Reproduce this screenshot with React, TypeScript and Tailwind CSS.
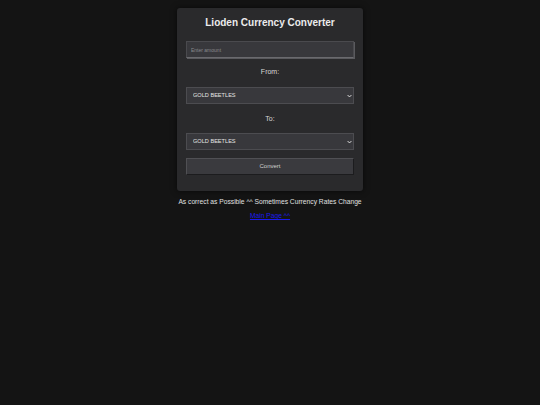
import React, { useState } from 'react';

const CURRENCIES = ['GOLD BEETLES', 'SILVER BEETLES', 'GEMS'];

const Chevron = () => (
  <svg viewBox="0 0 8 6" className="absolute right-[2px] top-[6.5px] w-[5px] h-[4px] pointer-events-none">
    <path d="M1 1.5 L4 4.5 L7 1.5" fill="none" stroke="#e0e0e0" strokeWidth="1.6" />
  </svg>
);

const App: React.FC = () => {
  const [amount, setAmount] = useState('');
  const [from, setFrom] = useState(CURRENCIES[0]);
  const [to, setTo] = useState(CURRENCIES[0]);

  return (
    <div className="min-h-[405px] bg-[#141414] font-['Liberation_Sans',Arial,sans-serif] text-[#e6e6e6] flex flex-col items-center pt-[8px]">
      <div className="w-[186px] bg-[#2a2a2c] rounded-[3px] shadow-[0_0_6px_rgba(0,0,0,0.6)] px-[9px] pt-[8px] pb-[16px] flex flex-col">
        <h1 className="text-center text-[10px] leading-[14px] font-bold text-[#ececec]">Lioden Currency Converter</h1>

        <input
          value={amount}
          onChange={e => setAmount(e.target.value)}
          placeholder="Enter amount"
          className="mt-[11px] block h-[17px] w-full bg-[#38383c] border border-[#4a4a4e] border-b-[#6a6a6e] shadow-[1px_1px_0_#5a5a5e] px-[4px] text-[5px] text-[#ddd] placeholder:text-[#8a8a8e] outline-none"
        />

        <label className="mt-[10px] text-center text-[7px] leading-[8px] text-[#d8d8d8]">From:</label>
        <div className="relative mt-[11px] h-[17px]">
          <select
            value={from}
            onChange={e => setFrom(e.target.value)}
            className="block appearance-none h-[17px] w-full bg-[#38383c] border border-[#4c4c50] px-[6px] text-[5.6px] text-[#e4e4e4] outline-none"
          >
            {CURRENCIES.map(c => <option key={c}>{c}</option>)}
          </select>
          <Chevron />
        </div>

        <label className="mt-[11px] text-center text-[7px] leading-[8px] text-[#d8d8d8]">To:</label>
        <div className="relative mt-[10px] h-[17px]">
          <select
            value={to}
            onChange={e => setTo(e.target.value)}
            className="block appearance-none h-[17px] w-full bg-[#38383c] border border-[#4c4c50] px-[6px] text-[5.6px] text-[#e4e4e4] outline-none"
          >
            {CURRENCIES.map(c => <option key={c}>{c}</option>)}
          </select>
          <Chevron />
        </div>

        <button className="mt-[8px] block h-[17px] w-full bg-[#3a3a3e] border border-[#505054] border-b-[#1c1c1e] border-r-[#1c1c1e] text-[6px] text-[#d0d0d0]">
          Convert
        </button>
      </div>

      <p className="mt-[7px] text-[6.7px] leading-[8px] text-[#e0e0e0]">As correct as Possible ^^ Sometimes Currency Rates Change</p>
      <a href="#" className="mt-[6px] text-[6.7px] leading-[8px] text-[#1a1aee] underline">Main Page ^^</a>
    </div>
  );
};

export default App;
